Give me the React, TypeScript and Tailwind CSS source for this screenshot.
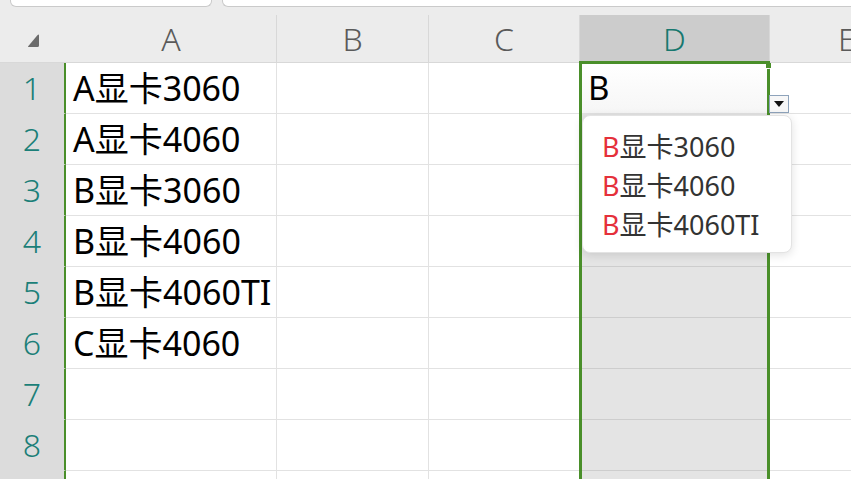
const rows = [
  'A显卡3060',
  'A显卡4060',
  'B显卡3060',
  'B显卡4060',
  'B显卡4060TI',
  'C显卡4060',
  '',
  '',
  '',
]

const options = ['显卡3060', '显卡4060', '显卡4060TI']

function CornerMark() {
  return (
    <svg width="14" height="14" viewBox="0 0 14 14" className="mt-[12px]">
      <path d="M12 1.5 L12 11.5 Q12 13 10.5 13 L1.8 13 Q0.6 13 1.4 12 L10.6 1 Q12 -0.2 12 1.5 Z" fill="#6b6b6b" />
    </svg>
  )
}

export default function App() {
  return (
    <div className="relative h-[479px] w-[851px] overflow-hidden bg-white font-['Noto_Sans','Noto_Sans_CJK_SC',sans-serif]">
      {/* window tabs strip */}
      <div className="flex h-[8px] bg-[#ececec]">
        <div className="ml-[10px] h-[7px] w-[202px] shrink-0 rounded-b-[6px] border border-t-0 border-[#cacaca] bg-white" />
        <div className="ml-[10px] h-[7px] flex-1 rounded-bl-[6px] border border-t-0 border-r-0 border-[#cacaca] bg-white" />
      </div>

      {/* column headers */}
      <div className="flex h-[55px] border-b border-[#d8d8d8] bg-[#ececec] text-[32px] font-light leading-none text-[#5a5a5a]">
        <div className="flex w-[66px] shrink-0 items-center justify-center pl-[2px]">
          <CornerMark />
        </div>
        <div className="mt-[7px] flex w-[211px] shrink-0 items-center justify-center border-r border-[#d8d8d8]">A</div>
        <div className="mt-[7px] flex w-[152px] shrink-0 items-center justify-center border-r border-[#d8d8d8]">B</div>
        <div className="mt-[7px] flex w-[151px] shrink-0 items-center justify-center border-r border-[#d8d8d8]">C</div>
        <div className="mt-[7px] flex w-[190px] shrink-0 items-center justify-center border-r border-[#d8d8d8] bg-[#cccccc] text-[#17786f]">D</div>
        <div className="mt-[7px] flex min-w-0 flex-1 items-center pl-[68px]">E</div>
      </div>

      {/* rows */}
      {rows.map((text, i) => (
        <div key={i} className="flex h-[51px]">
          <div className="flex w-[66px] shrink-0 items-center justify-center border-r-2 border-b border-r-[#4a8f2a] border-b-[#dcdcdc] bg-[#dcdcdc] text-[32px] font-light text-[#1b7f78]">
            {i < 8 ? i + 1 : ''}
          </div>
          <div className="flex w-[211px] shrink-0 items-center border-r border-b border-[#e2e2e2] pl-[7px] text-[34px] whitespace-nowrap text-black">
            {text}
          </div>
          <div className="w-[152px] shrink-0 border-r border-b border-[#e2e2e2]" />
          <div className="w-[151px] shrink-0 border-r border-b border-[#e2e2e2]" />
          {i === 0 ? (
            <div className="flex w-[190px] shrink-0 items-center border-r border-b border-[#e2e2e2] bg-gradient-to-b from-white to-[#f6f6f6] pl-[8px] text-[33px] text-black">
              B
            </div>
          ) : (
            <div className="w-[190px] shrink-0 border-r border-b border-r-[#e2e2e2] border-b-[#cdcdcd] bg-[#e4e4e4]" />
          )}
          <div className="flex-1 border-b border-[#e2e2e2]" />
        </div>
      ))}

      {/* selection outline */}
      <div className="absolute top-[61px] left-[579px] h-[430px] w-[191px] border-t-[3px] border-l-[3px] border-[#4a8f2a]" />
      <div className="absolute top-[69px] left-[767px] h-[420px] w-[3px] bg-[#4a8f2a]" />
      <div className="absolute top-[63px] left-[766px] h-[5px] w-[5px] bg-[#4a8f2a]" />

      {/* dropdown button */}
      <div className="absolute top-[95px] left-[769px] flex h-[18px] w-[20px] items-center justify-center border border-[#8ea3bb] bg-[#f7f7f7]">
        <svg width="10" height="6" viewBox="0 0 10 6">
          <path d="M0 0 H10 L5 6 Z" fill="#111" />
        </svg>
      </div>

      {/* dropdown list */}
      <div className="absolute top-[115px] left-[582px] flex h-[138px] w-[210px] flex-col rounded-[8px] border border-[#e3e3e3] bg-white pt-[11px] pl-[19px] shadow-[0_2px_10px_rgba(0,0,0,0.12)]">
        {options.map((o) => (
          <div key={o} className="h-[39px] text-[27px] leading-[39px] whitespace-nowrap text-[#333]">
            <span className="text-[#e5303a]">B</span>
            {o}
          </div>
        ))}
      </div>
    </div>
  )
}
